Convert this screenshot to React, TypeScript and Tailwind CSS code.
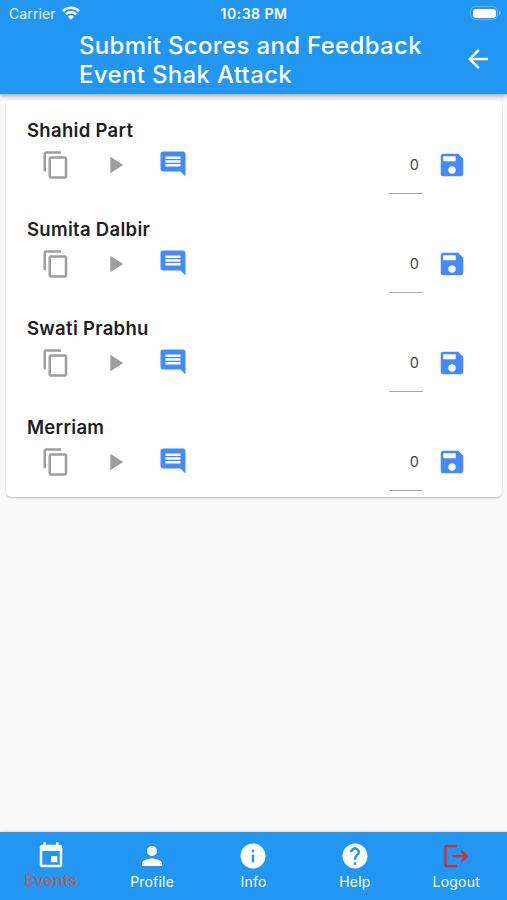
import React, { useState } from 'react';
import { MdArrowBack, MdComment, MdContentCopy, MdEvent, MdHelp, MdInfo, MdPerson, MdPlayArrow, MdSave } from 'react-icons/md';

const participants = ['Shahid Part', 'Sumita Dalbir', 'Swati Prabhu', 'Merriam'];

const LogoutIcon: React.FC = () => (
  <svg viewBox="0 0 24 24" className="h-[30px] w-[30px] text-[#dd2a2a]" fill="currentColor">
    <path d="M17 7.2l-1.4 1.4 2.6 2.6H9.2v1.7h9l-2.6 2.6 1.4 1.4 4.8-4.8zM4.5 4.9h8.1V3.1H4.2c-.9 0-1.6.7-1.6 1.6v14.6c0 .9.7 1.6 1.6 1.6h8.4v-1.8H4.5z" />
  </svg>
);

const StatusBar: React.FC = () => (
  <div className="grid h-7 grid-cols-3 items-center pl-[9px] pr-[6px] text-[14px] leading-none text-white">
    <div className="flex items-center gap-[6px]">
      <span className="tracking-[0.1px] opacity-90">Carrier</span>
      <svg viewBox="0 0 18 14" className="-mt-[2px] h-[14px] w-[18px]" fill="none" stroke="currentColor" strokeWidth="2.5">
        <path d="M0.9 5.2a11.5 11.5 0 0 1 16.2 0" />
        <path d="M3.8 8.3a7.4 7.4 0 0 1 10.4 0" />
        <path d="M9 13.8l-2.9-3a4.1 4.1 0 0 1 5.8 0z" fill="currentColor" stroke="none" />
      </svg>
    </div>
    <span className="-ml-[2px] text-center font-semibold tracking-[0.5px]">10:38 PM</span>
    <div className="-mt-[2px] flex items-center justify-end gap-px">
      <div className="h-[14px] w-7 rounded-[5px] border border-white/30 p-[1.5px]">
        <div className="h-full rounded-[3px] bg-white" />
      </div>
      <div className="h-1 w-[2px] rounded-r-full bg-white/40" />
    </div>
  </div>
);

const ParticipantRow: React.FC<{ name: string }> = ({ name }) => {
  const [score, setScore] = useState('0');

  return (
    <div className="h-[99px] pl-[21px] pr-[35px]">
      <h2 className="pt-[19px] text-[18.5px] font-semibold leading-[22px] tracking-[0.3px] text-[#212121]">{name}</h2>
      <div className="flex h-[54px] items-start pl-[14px] pt-[8px]">
        <button aria-label="Copy" className="pt-[0.5px]">
          <MdContentCopy className="h-[30px] w-[30px] text-[#9e9e9e]" />
        </button>
        <button aria-label="Play" className="ml-[29.5px] pt-[1.5px]">
          <MdPlayArrow className="h-7 w-7 text-[#9e9e9e]" />
        </button>
        <button aria-label="Comment" className="ml-[29.5px]">
          <MdComment className="h-[30px] w-[30px] text-[#448aff]" />
        </button>
        <input
          aria-label={`Score for ${name}`}
          value={score}
          onChange={(e) => setScore(e.target.value)}
          className="ml-auto h-[45px] w-[34px] border-b border-[#a8a8a8] pb-[13px] pr-[4px] text-right text-[14.5px] text-[#444] outline-none"
        />
        <button aria-label="Save" className="ml-[14px] pt-[0.5px]">
          <MdSave className="h-[30px] w-[30px] text-[#448aff]" />
        </button>
      </div>
    </div>
  );
};

export default function App() {
  const tabs = [
    { label: 'Events', icon: <MdEvent className="h-[30px] w-[30px]" /> },
    { label: 'Profile', icon: <MdPerson className="h-[30px] w-[30px]" /> },
    { label: 'Info', icon: <MdInfo className="h-[30px] w-[30px]" /> },
    { label: 'Help', icon: <MdHelp className="h-[30px] w-[30px]" /> },
    { label: 'Logout', icon: <LogoutIcon /> },
  ];
  const [active, setActive] = useState('Events');

  return (
    <div className="flex h-screen flex-col bg-[#fafafa] font-['Inter',sans-serif]">
      {/* Header */}
      <header className="z-10 h-[94px] shrink-0 bg-[#2196f3] shadow-[0_2px_5px_rgba(0,0,0,0.35)]">
        <StatusBar />
        <div className="flex items-start justify-between pl-[79px] pr-[14px] pt-[3px]">
          <h1 className="whitespace-nowrap text-[24px] font-medium leading-[29px] tracking-[0.33px] text-white">
            Submit Scores and Feedback
            <br />
            Event Shak Attack
          </h1>
          <button aria-label="Back" className="pt-[13px]">
            <MdArrowBack className="h-[30px] w-[30px] text-white" />
          </button>
        </div>
      </header>

      {/* Scores */}
      <main className="flex-1">
        <div className="ml-[6px] mr-[5px] mt-[6px] h-[397px] rounded-[5px] bg-white shadow-[0_1px_2px_rgba(0,0,0,0.25)]">
          {participants.map((name) => (
            <ParticipantRow key={name} name={name} />
          ))}
        </div>
      </main>

      {/* Bottom navigation */}
      <nav className="grid h-[68px] shrink-0 grid-cols-5 bg-[#2196f3] shadow-[0_-1px_2px_rgba(0,0,0,0.15)]">
        {tabs.map((tab) => (
          <button key={tab.label} onClick={() => setActive(tab.label)} className="flex flex-col items-center pt-[9px] text-white">
            {tab.icon}
            {active === tab.label ? (
              <span className="-mt-px text-[16.5px] font-medium leading-[20px] text-[#b0645f]">{tab.label}</span>
            ) : (
              <span className="pt-px text-[14px] leading-[20px] tracking-[0.2px]">{tab.label}</span>
            )}
          </button>
        ))}
      </nav>
    </div>
  );
}
